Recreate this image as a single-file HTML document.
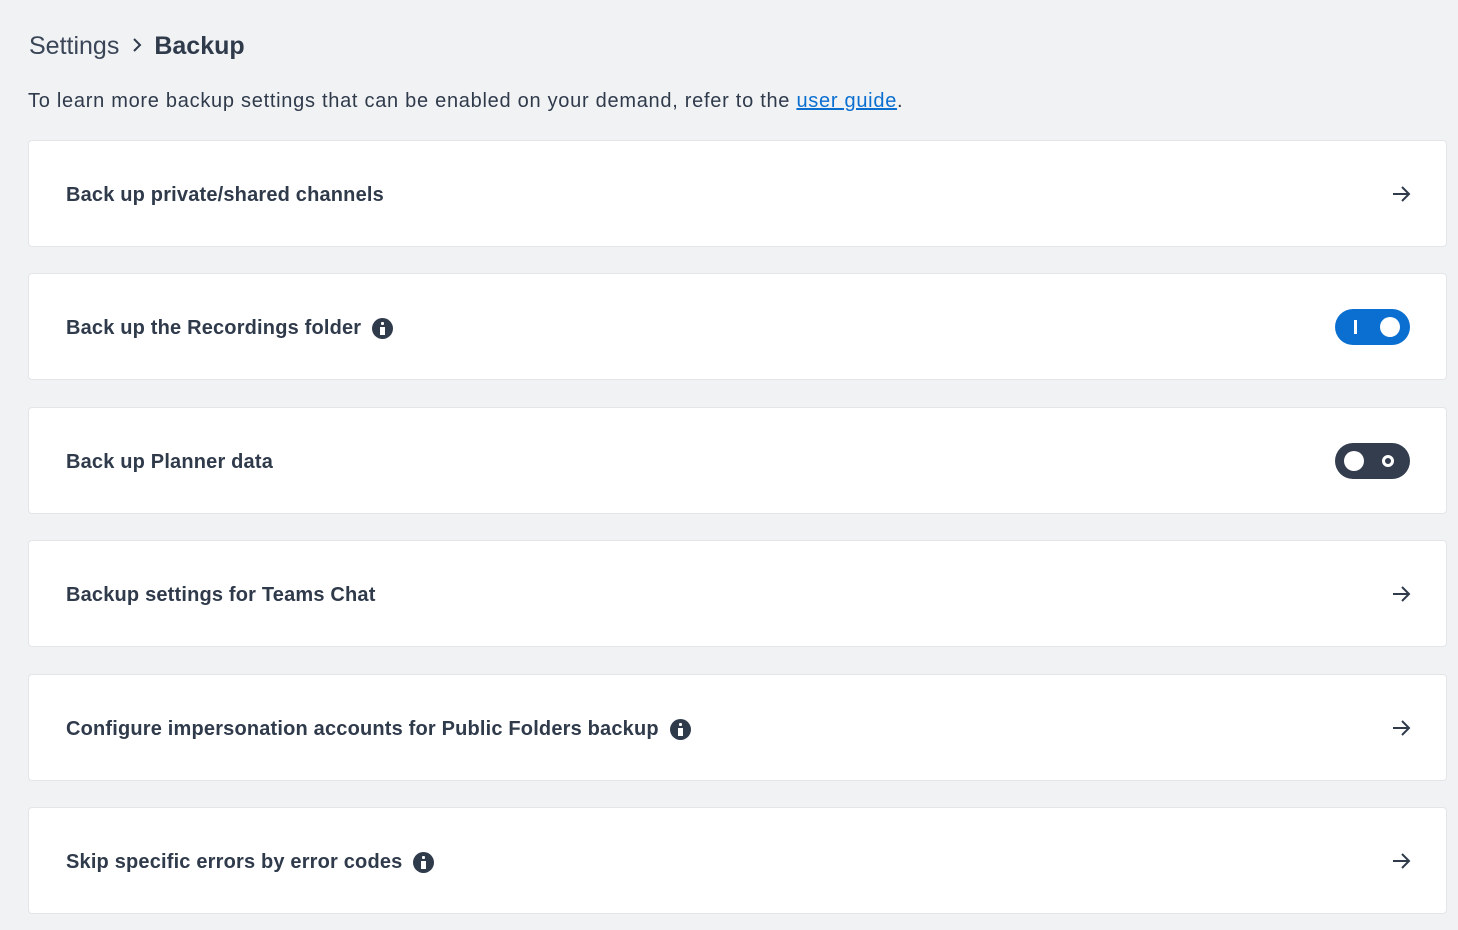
<!DOCTYPE html>
<html><head><meta charset="utf-8"><style>
body{margin:0;background:#f1f2f4;font-family:"Liberation Sans",sans-serif;color:#2f3a4b;width:1458px;height:930px;overflow:hidden;position:relative}
.bc{position:absolute;left:29px;top:29px;font-size:25px;line-height:34px;color:#3a4657}
.bc b{color:#2f3a4b}
.bc svg{vertical-align:middle;margin:0 11px 4px 12px}
.desc{position:absolute;left:28px;top:87px;font-size:20px;line-height:28px;color:#2f3a4b;letter-spacing:0.72px}
.desc a{color:#0a6fd0;text-decoration:underline}
.card{position:absolute;left:28px;width:1419px;height:107px;background:#fff;border:1px solid #e3e5e8;border-radius:4px;box-sizing:border-box}
.card .t{position:absolute;left:37px;top:40px;font-size:20px;font-weight:bold;line-height:28px;letter-spacing:0.18px}
.info{display:inline-block;width:21px;height:21px;border-radius:50%;background:#2f3a4b;vertical-align:middle;margin-left:11px;position:relative;top:0px}
.info:before{content:"";position:absolute;left:9px;top:4px;width:3px;height:3px;background:#fff;border-radius:1px}
.info:after{content:"";position:absolute;left:8px;top:9px;width:5px;height:8px;background:#fff}
.arr{position:absolute;right:34px;top:43px}
.tog{position:absolute;left:1306px;top:35px;width:75px;height:36px;border-radius:18px}
</style></head><body>
<div class="bc">Settings<svg width="12" height="16" viewBox="0 0 12 16"><path d="M3 2l6 6-6 6" fill="none" stroke="#2f3a4b" stroke-width="2"/></svg><b>Backup</b></div>
<div class="desc">To learn more backup settings that can be enabled on your demand, refer to the <a>user guide</a>.</div>

<div class="card" style="top:140px"><div class="t">Back up private/shared channels</div><svg class="arr" width="20" height="20" viewBox="0 0 20 20"><path d="M1 10h16M10 3l7 7-7 7" fill="none" stroke="#2f3a4b" stroke-width="2"/></svg></div>

<div class="card" style="top:273px"><div class="t">Back up the Recordings folder<span class="info"></span></div>
<div class="tog" style="background:#0a6fd0"><div style="position:absolute;left:19px;top:11px;width:3px;height:14px;background:#fff"></div><div style="position:absolute;left:45px;top:8px;width:20px;height:20px;border-radius:50%;background:#fff"></div></div></div>

<div class="card" style="top:407px"><div class="t">Back up Planner data</div>
<div class="tog" style="background:#333d4e"><div style="position:absolute;left:9px;top:8px;width:20px;height:20px;border-radius:50%;background:#fff"></div><div style="position:absolute;left:47px;top:12px;width:6px;height:6px;border-radius:50%;border:3px solid #fff"></div></div></div>

<div class="card" style="top:540px"><div class="t">Backup settings for Teams Chat</div><svg class="arr" width="20" height="20" viewBox="0 0 20 20"><path d="M1 10h16M10 3l7 7-7 7" fill="none" stroke="#2f3a4b" stroke-width="2"/></svg></div>

<div class="card" style="top:674px"><div class="t">Configure impersonation accounts for Public Folders backup<span class="info"></span></div><svg class="arr" width="20" height="20" viewBox="0 0 20 20"><path d="M1 10h16M10 3l7 7-7 7" fill="none" stroke="#2f3a4b" stroke-width="2"/></svg></div>

<div class="card" style="top:807px"><div class="t">Skip specific errors by error codes<span class="info"></span></div><svg class="arr" width="20" height="20" viewBox="0 0 20 20"><path d="M1 10h16M10 3l7 7-7 7" fill="none" stroke="#2f3a4b" stroke-width="2"/></svg></div>
</body></html>
